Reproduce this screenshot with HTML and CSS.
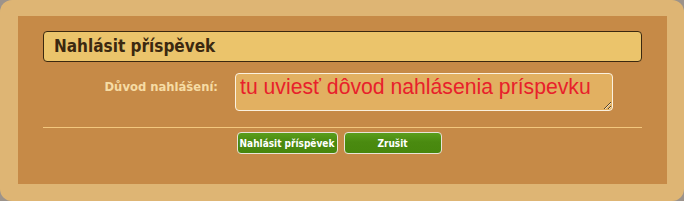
FILE: index.html
```html
<!DOCTYPE html>
<html lang="cs">
<head>
    <meta charset="UTF-8">
    <title>Nahlásit příspěvek</title>
    <link rel="stylesheet" href="styles.css">
</head>
<body>
    <div class="frame">
        <div class="panel">
            <h2 class="title">Nahlásit příspěvek</h2>
            <form class="report">
                <div class="row">
                    <label for="reason">Důvod nahlášení:</label>
                    <textarea id="reason">tu uviesť dôvod nahlásenia príspevku</textarea>
                </div>
                <hr>
                <div class="actions">
                    <button type="button" class="btn">Nahlásit příspěvek</button>
                    <button type="button" class="btn btn-wide">Zrušit</button>
                </div>
            </form>
        </div>
    </div>
</body>
</html>
```

FILE: styles.css
```css
html, body { margin: 0; height: 100%; background: #9c938b; }
body { font-family: "DejaVu Sans", Verdana, sans-serif; }
.frame { box-sizing: border-box; height: 201px; padding: 16px 17px 17px 18px; background: #deb574; border-radius: 12px; }
.panel { background: #c68a47; height: 168px; padding: 15px 25px 0 25px; box-sizing: border-box; }
.title { margin: 0; height: 31px; box-sizing: border-box; padding: 0 10px; line-height: 29px; font-family: "DejaVu Sans Condensed", "DejaVu Sans", sans-serif; font-size: 17px; font-weight: bold; color: #3b2810; background: #ebc46b; border: 1px solid #3b2810; border-radius: 4px; }
.row { display: flex; align-items: flex-start; margin-top: 11px; }
.row label { width: 175px; text-align: right; padding-right: 17px; padding-top: 7px; font-size: 11.6px; font-weight: bold; color: #f6dca4; }
textarea { width: 378px; height: 38px; box-sizing: border-box; padding: 1px 4px; background: #e2b061; border: 1px solid #fbf1df; border-radius: 4px; font-family: "Liberation Sans", Arial, sans-serif; font-size: 21.2px; color: #e8212b; resize: vertical; overflow: hidden; }
hr { border: 0; border-top: 1px solid #f3c77d; margin: 16px 0 4px; }
.actions { display: flex; justify-content: center; gap: 6px; padding-right: 7px; }
.btn { width: 101px; height: 22px; padding: 0; font-family: "DejaVu Sans Condensed", "DejaVu Sans", sans-serif; font-size: 10px; font-weight: bold; color: #fff; background: linear-gradient(#5a9e1c, #4a8a10 45%, #47870d); border: 1px solid #e8e4d8; border-radius: 4px; }
.btn-wide { width: 98px; }
```
